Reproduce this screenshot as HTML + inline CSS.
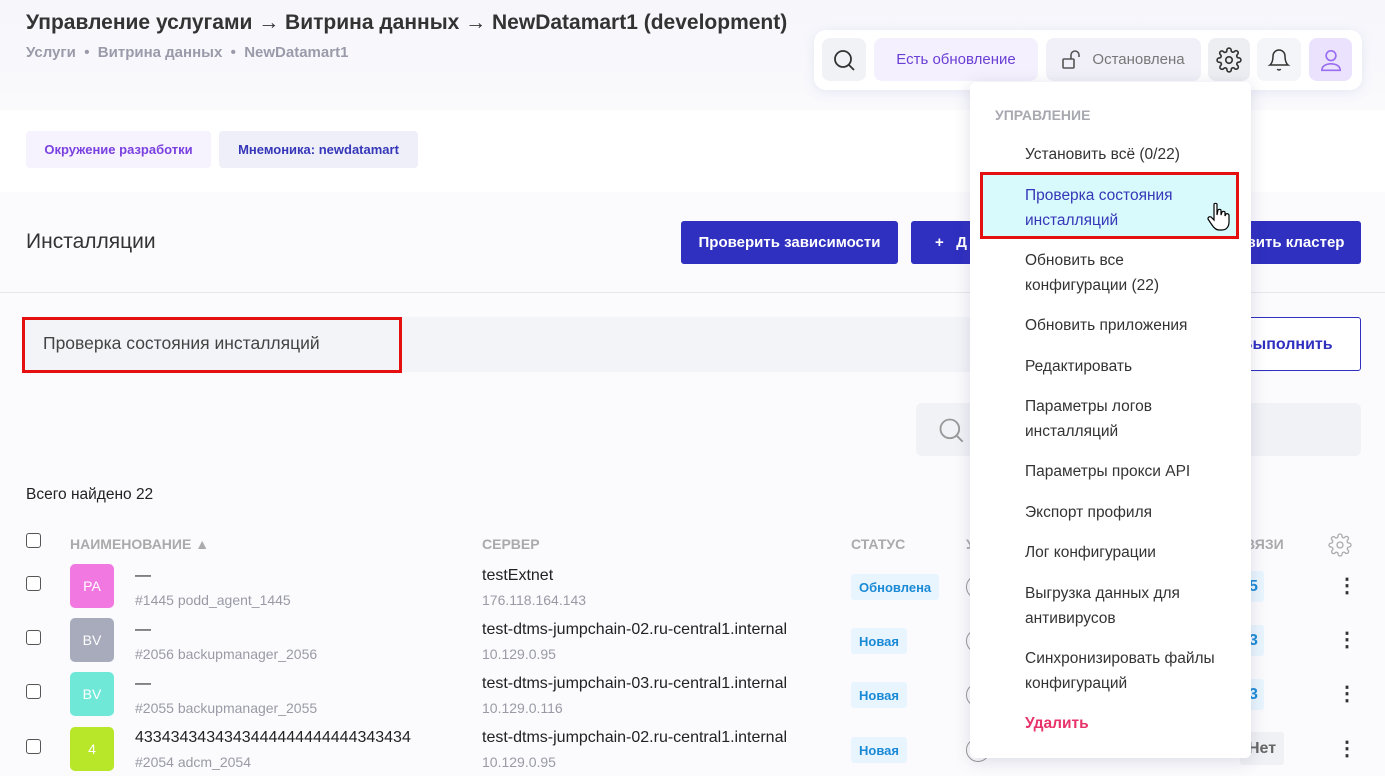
<!DOCTYPE html>
<html><head><meta charset="utf-8"><style>
*{box-sizing:border-box;margin:0;padding:0}
body{width:1385px;height:776px;overflow:hidden;background:#fbfbfd;font-family:"Liberation Sans","Noto Sans CJK SC",sans-serif;color:#333;position:relative;font-size:15px}
.a{position:absolute;white-space:nowrap}
.btn{position:absolute;background:#2f2fc0;color:#fff;font-weight:bold;font-size:15px;border-radius:3px;display:flex;align-items:center;justify-content:center}
.tb{position:absolute;top:38px;height:43px;border-radius:8px;display:flex;align-items:center;justify-content:center;font-size:15px}
.cb{position:absolute;width:15px;height:15px;border:1.5px solid #555;border-radius:3px;background:#fff}
.av{position:absolute;left:70px;width:44px;height:44px;border-radius:5px;color:#fff;font-size:14px;display:flex;align-items:center;justify-content:center}
.nm{position:absolute;left:135px;font-size:16px;color:#222}
.sub{position:absolute;font-size:14px;color:#9a9aa6}
.tag{position:absolute;left:851px;height:26px;padding:0 8px;background:#e9f5fe;color:#1a8ad6;font-weight:bold;font-size:13px;border-radius:3px;display:flex;align-items:center}
.dots{position:absolute;left:1337px;width:4px;font-size:20px;font-weight:bold;color:#333}
.mi{position:absolute;left:1025px;font-size:15.5px;color:#333;line-height:25px}
.hd{position:absolute;top:536px;font-size:14px;color:#aaa;font-weight:bold}
.ci{position:absolute;left:966px;width:24px;height:24px;border:1.5px solid #999;border-radius:50%}
</style></head><body>
<div class="a" style="left:0;top:0;width:1385px;height:110px;background:linear-gradient(#f6f6fb,#fafafd)"></div>
<div class="a" style="left:26px;top:11px;font-size:21px;font-weight:bold;color:#333">Управление услугами → Витрина данных → NewDatamart1 (development)</div>
<div class="a" style="left:26px;top:44px;font-size:15px;color:#9a9aaa;font-weight:bold">Услуги &nbsp;•&nbsp; Витрина данных &nbsp;•&nbsp; NewDatamart1</div>

<div class="a" style="left:814px;top:30px;width:548px;height:60px;background:#fff;border-radius:12px;box-shadow:0 2px 12px rgba(120,120,200,.15)"></div>
<div class="tb" style="left:822px;width:44px;background:#f1f2f6"><svg width="24" height="24" viewBox="0 0 24 24" fill="none" stroke="#333" stroke-width="1.8"><circle cx="11" cy="11" r="8"/><path d="M17 17l5 5"/></svg></div>
<div class="tb" style="left:874px;width:164px;background:#f4f0fd;color:#6a3fd6">Есть обновление</div>
<div class="tb" style="left:1046px;width:155px;background:#f1f0f8;color:#777"><svg width="22" height="20" viewBox="0 0 22 20" fill="none" stroke="#555" stroke-width="1.6" style="margin-right:8px"><rect x="1" y="9" width="11" height="9" rx="1"/><path d="M9 9V5a4 4 0 0 1 8 0v2"/></svg>Остановлена</div>
<div class="tb" style="left:1208px;width:42px;background:#eceef2"><svg width="26" height="26" viewBox="0 0 24 24" fill="none" stroke="#333" stroke-width="1.5"><circle cx="12" cy="12" r="3"/><path d="M19.4 15a1.6 1.6 0 0 0 .3 1.8l.1.1a2 2 0 1 1-2.8 2.8l-.1-.1a1.6 1.6 0 0 0-1.8-.3 1.6 1.6 0 0 0-1 1.5V21a2 2 0 1 1-4 0v-.1a1.6 1.6 0 0 0-1-1.5 1.6 1.6 0 0 0-1.8.3l-.1.1a2 2 0 1 1-2.8-2.8l.1-.1a1.6 1.6 0 0 0 .3-1.8 1.6 1.6 0 0 0-1.5-1H3a2 2 0 1 1 0-4h.1a1.6 1.6 0 0 0 1.5-1 1.6 1.6 0 0 0-.3-1.8l-.1-.1a2 2 0 1 1 2.8-2.8l.1.1a1.6 1.6 0 0 0 1.8.3H9a1.6 1.6 0 0 0 1-1.5V3a2 2 0 1 1 4 0v.1a1.6 1.6 0 0 0 1 1.5 1.6 1.6 0 0 0 1.8-.3l.1-.1a2 2 0 1 1 2.8 2.8l-.1.1a1.6 1.6 0 0 0-.3 1.8V9a1.6 1.6 0 0 0 1.5 1H21a2 2 0 1 1 0 4h-.1a1.6 1.6 0 0 0-1.5 1z"/></svg></div>
<div class="tb" style="left:1257px;width:44px;background:#f4f5f8"><svg width="24" height="24" viewBox="0 0 24 24" fill="none" stroke="#333" stroke-width="1.5"><path d="M18 8a6 6 0 0 0-12 0c0 7-3 9-3 9h18s-3-2-3-9"/><path d="M13.7 21a2 2 0 0 1-3.4 0"/></svg></div>
<div class="tb" style="left:1309px;width:43px;background:#ebe3fd"><svg width="26" height="26" viewBox="0 0 24 24" fill="none" stroke="#9a6cf0" stroke-width="1.5"><circle cx="12" cy="8" r="4.5"/><path d="M3.5 21.5c0-4 4-6 8.5-6s8.5 2 8.5 6z"/></svg></div>

<div class="a" style="left:0;top:110px;width:1385px;height:82px;background:#fff"></div>
<div class="a" style="left:26px;top:131px;width:185px;height:37px;background:#f6f2fe;border-radius:4px;color:#7a40e0;font-weight:bold;font-size:13px;display:flex;align-items:center;justify-content:center">Окружение разработки</div>
<div class="a" style="left:219px;top:131px;width:199px;height:37px;background:#eeeff8;border-radius:4px;color:#3536b8;font-weight:bold;font-size:13px;display:flex;align-items:center;justify-content:center">Мнемоника: newdatamart</div>

<div class="a" style="left:26px;top:230px;font-size:21px;color:#333">Инсталляции</div>
<div class="btn" style="left:681px;top:221px;width:217px;height:43px">Проверить зависимости</div>
<div class="btn" style="left:911px;top:221px;width:80px;height:43px;justify-content:flex-start;padding-left:24px">+&nbsp;&nbsp;&nbsp;Д</div>
<div class="btn" style="left:1230px;top:221px;width:131px;height:43px">вить кластер</div>
<div class="a" style="left:0;top:292px;width:1385px;height:1px;background:#e6e6ec"></div>

<div class="a" style="left:22px;top:317px;width:1250px;height:55px;background:#f2f4f8"></div>
<div class="a" style="left:22px;top:317px;width:380px;height:56px;border:3px solid #e41010"></div>
<div class="a" style="left:43px;top:333px;font-size:17.5px;color:#444">Проверка состояния инсталляций</div>
<div class="a" style="left:1210px;top:317px;width:151px;height:54px;border:1px solid #2f2fc0;border-radius:3px;background:#fff;color:#2f2fc0;font-weight:bold;font-size:16px;padding:18px 0 0 30px">Выполнить</div>

<div class="a" style="left:916px;top:403px;width:445px;height:53px;background:#f0f2f6;border-radius:6px"></div>
<svg class="a" style="left:937px;top:416px" width="28" height="28" viewBox="0 0 24 24" fill="none" stroke="#999" stroke-width="1.6"><circle cx="11" cy="11" r="8"/><path d="M17 17l5 5"/></svg>

<div class="a" style="left:26px;top:486px;font-size:15.5px;color:#222">Всего найдено 22</div>
<div class="cb" style="left:26px;top:533px"></div>
<div class="hd" style="left:70px">НАИМЕНОВАНИЕ ▲</div>
<div class="hd" style="left:482px">СЕРВЕР</div>
<div class="hd" style="left:851px">СТАТУС</div>
<div class="hd" style="left:966px">У</div>
<div class="hd" style="left:1245px">ВЯЗИ</div>
<svg class="a" style="left:1328px;top:533px" width="24" height="24" viewBox="0 0 24 24" fill="none" stroke="#aaa" stroke-width="1.3"><circle cx="12" cy="12" r="3"/><path d="M19.4 15a1.6 1.6 0 0 0 .3 1.8l.1.1a2 2 0 1 1-2.8 2.8l-.1-.1a1.6 1.6 0 0 0-1.8-.3 1.6 1.6 0 0 0-1 1.5V21a2 2 0 1 1-4 0v-.1a1.6 1.6 0 0 0-1-1.5 1.6 1.6 0 0 0-1.8.3l-.1.1a2 2 0 1 1-2.8-2.8l.1-.1a1.6 1.6 0 0 0 .3-1.8 1.6 1.6 0 0 0-1.5-1H3a2 2 0 1 1 0-4h.1a1.6 1.6 0 0 0 1.5-1 1.6 1.6 0 0 0-.3-1.8l-.1-.1a2 2 0 1 1 2.8-2.8l.1.1a1.6 1.6 0 0 0 1.8.3H9a1.6 1.6 0 0 0 1-1.5V3a2 2 0 1 1 4 0v.1a1.6 1.6 0 0 0 1 1.5 1.6 1.6 0 0 0 1.8-.3l.1-.1a2 2 0 1 1 2.8 2.8l-.1.1a1.6 1.6 0 0 0-.3 1.8V9a1.6 1.6 0 0 0 1.5 1H21a2 2 0 1 1 0 4h-.1a1.6 1.6 0 0 0-1.5 1z"/></svg>

<div class="cb" style="left:26px;top:576px"></div>
<div class="av" style="top:564px;background:#f078e0">PA</div>
<div class="nm" style="top:567px">—</div><div class="sub" style="left:135px;top:592px">#1445 podd_agent_1445</div>
<div class="nm" style="left:482px;top:567px">testExtnet</div><div class="sub" style="left:482px;top:592px">176.118.164.143</div>
<div class="tag" style="top:574px">Обновлена</div>
<div class="ci" style="top:575px"></div>
<div class="tag" style="left:1243px;top:571px;height:31px;font-size:16px;padding:0 6px">5</div>
<div class="dots" style="top:573px">⋮</div>

<div class="cb" style="left:26px;top:630px"></div>
<div class="av" style="top:618px;background:#a8abbb">BV</div>
<div class="nm" style="top:621px">—</div><div class="sub" style="left:135px;top:646px">#2056 backupmanager_2056</div>
<div class="nm" style="left:482px;top:621px">test-dtms-jumpchain-02.ru-central1.internal</div><div class="sub" style="left:482px;top:646px">10.129.0.95</div>
<div class="tag" style="top:628px">Новая</div>
<div class="ci" style="top:629px"></div>
<div class="tag" style="left:1243px;top:625px;height:31px;font-size:16px;padding:0 6px">3</div>
<div class="dots" style="top:627px">⋮</div>

<div class="cb" style="left:26px;top:684px"></div>
<div class="av" style="top:672px;background:#70e8d8">BV</div>
<div class="nm" style="top:675px">—</div><div class="sub" style="left:135px;top:700px">#2055 backupmanager_2055</div>
<div class="nm" style="left:482px;top:675px">test-dtms-jumpchain-03.ru-central1.internal</div><div class="sub" style="left:482px;top:700px">10.129.0.116</div>
<div class="tag" style="top:682px">Новая</div>
<div class="ci" style="top:683px"></div>
<div class="tag" style="left:1243px;top:679px;height:31px;font-size:16px;padding:0 6px">3</div>
<div class="dots" style="top:681px">⋮</div>

<div class="cb" style="left:26px;top:739px"></div>
<div class="av" style="top:727px;background:#b8e628">4</div>
<div class="nm" style="top:729px">4334343434343444444444444343434</div><div class="sub" style="left:135px;top:754px">#2054 adcm_2054</div>
<div class="nm" style="left:482px;top:729px">test-dtms-jumpchain-02.ru-central1.internal</div><div class="sub" style="left:482px;top:754px">10.129.0.95</div>
<div class="tag" style="top:737px">Новая</div>
<div class="ci" style="top:738px"></div>
<div class="tag" style="left:1240px;top:732px;height:33px;font-size:16px;background:#f0f1f5;color:#666">Нет</div>
<div class="dots" style="top:736px">⋮</div>

<div class="a" style="left:970px;top:82px;width:281px;height:676px;background:#fff;border-radius:6px;box-shadow:0 3px 16px rgba(80,80,120,.18)"></div>
<div class="a" style="left:995px;top:107px;font-size:14px;color:#a8a8b0;font-weight:bold">УПРАВЛЕНИЕ</div>
<div class="mi" style="top:142px">Установить всё (0/22)</div>
<div class="a" style="left:980px;top:172px;width:259px;height:67px;background:#d8fafc;border:3px solid #e41010"></div>
<div class="mi" style="top:183px;color:#3536b8">Проверка состояния<br>инсталляций</div>
<svg class="a" style="left:1206px;top:202px" width="24" height="30" viewBox="0 0 24 30" fill="#fff" stroke="#000" stroke-width="1.2"><path d="M8 2a2 2 0 0 1 3 0v11l1-5a2 2 0 0 1 3 0v5l1-3a2 2 0 0 1 3 0v4l1-2a2 2 0 0 1 3 1v7c0 5-3 8-7 8h-3c-3 0-5-2-7-5l-4-6a2 2 0 0 1 3-2l3 3z"/></svg>
<div class="mi" style="top:248px">Обновить все<br>конфигурации (22)</div>
<div class="mi" style="top:313px">Обновить приложения</div>
<div class="mi" style="top:354px">Редактировать</div>
<div class="mi" style="top:394px">Параметры логов<br>инсталляций</div>
<div class="mi" style="top:459px">Параметры прокси API</div>
<div class="mi" style="top:500px">Экспорт профиля</div>
<div class="mi" style="top:540px">Лог конфигурации</div>
<div class="mi" style="top:581px">Выгрузка данных для<br>антивирусов</div>
<div class="mi" style="top:646px">Синхронизировать файлы<br>конфигураций</div>
<div class="mi" style="top:711px;color:#e8336a;font-weight:bold">Удалить</div>
</body></html>
